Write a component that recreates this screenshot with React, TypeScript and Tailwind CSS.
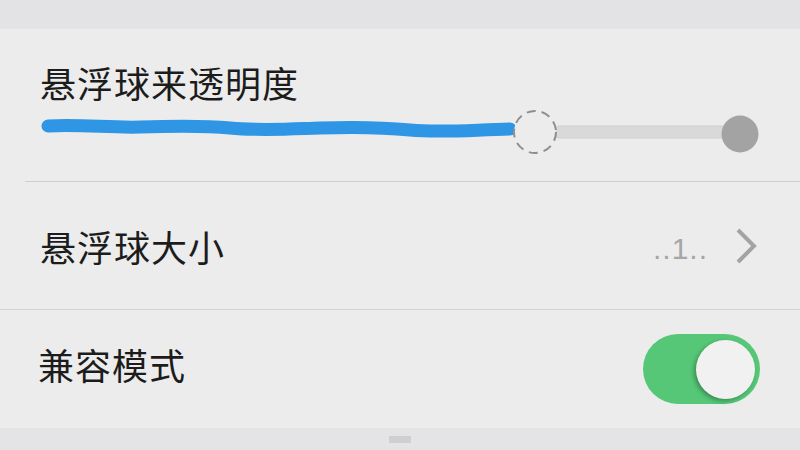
import React from 'react';

const font = { fontFamily: '"Noto Sans CJK SC", "Noto Sans", sans-serif' };

const OpacitySlider: React.FC = () => (
  <svg width="720" height="50" viewBox="0 0 720 50" className="block">
    {/* blue filled part, slightly wavy */}
    <path
      d="M8 17 C 40 15, 70 19, 100 18 S 160 16, 190 19 S 250 20, 280 19 S 340 18, 370 21 S 430 21, 470 20"
      fill="none"
      stroke="#2f96e6"
      strokeWidth="13"
      strokeLinecap="round"
    />
    <rect x="516" y="17" width="170" height="12" rx="3" fill="#d9d9d9" stroke="#cfcfcf" strokeWidth="1" />
    <circle cx="495" cy="23" r="21" fill="#ececec" stroke="#8f8f8f" strokeWidth="2" strokeDasharray="9 6" />
    <circle cx="700" cy="25" r="18.5" fill="#a3a3a3" />
  </svg>
);

const Chevron: React.FC = () => (
  <svg width="24" height="38" viewBox="0 0 24 38">
    <path d="M4 3 L20 19 L4 35" fill="none" stroke="#a3a3a3" strokeWidth="4" />
  </svg>
);

const App: React.FC = () => {
  return (
    <div className="w-[800px] h-[450px] overflow-hidden bg-[#ececec] flex flex-col" style={font}>
      <div className="h-[29px] bg-[#e3e3e6] shrink-0" />

      {/* opacity row */}
      <div className="h-[152px] pl-[40px] pt-[35px] shrink-0">
        <div className="text-[36px] leading-none text-[#1c1c1c] tracking-[1px]">悬浮球来透明度</div>
        <div className="mt-[9px]">
          <OpacitySlider />
        </div>
      </div>
      <div className="ml-[25px] h-[1px] bg-[#cfcfcf] shrink-0" />

      {/* size row */}
      <div className="h-[127px] pl-[40px] pr-[42px] flex items-center justify-between shrink-0">
        <div className="text-[36px] leading-none text-[#1c1c1c] tracking-[1px]">悬浮球大小</div>
        <div className="flex items-center gap-[26px]">
          <span
            className="text-[30px] leading-none text-[#a6a6a6] tracking-[1px] mt-[6px]"
            style={{ fontFamily: '"Liberation Sans", sans-serif' }}
          >
            ..1..
          </span>
          <Chevron />
        </div>
      </div>
      <div className="h-[1px] bg-[#d4d4d4] shrink-0" />

      {/* compatibility row */}
      <div className="h-[118px] pl-[38px] pr-[40px] flex items-center justify-between shrink-0">
        <div className="text-[36px] leading-none text-[#1c1c1c] tracking-[1px] -mt-[10px]">兼容模式</div>
        <div className="w-[117px] h-[70px] rounded-full bg-[#55c776] flex items-center justify-end pr-[5px]">
          <div className="w-[59px] h-[59px] rounded-full bg-[#f1f1f1] shadow-[-2px_2px_4px_rgba(0,0,0,0.3)]" />
        </div>
      </div>

      <div className="flex-1 bg-[#e4e4e6] flex justify-center pt-[8px]">
        <div className="w-[22px] h-[7px] bg-[#cfcfd1] rounded-[1px]" />
      </div>
    </div>
  );
};

export default App;
